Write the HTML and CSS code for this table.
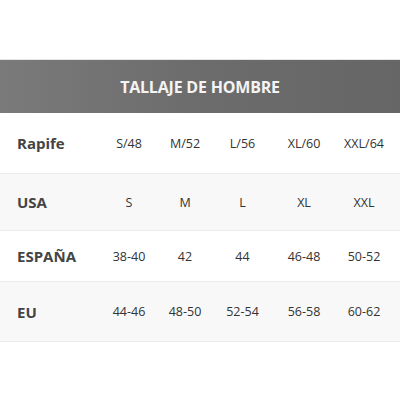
FILE: index.html
```html
<!DOCTYPE html>
<html>
<head>
<meta charset="utf-8">
<link rel="stylesheet" href="styles.css">
</head>
<body>
<div class="page">
  <div class="header">TALLAJE DE HOMBRE</div>
  <div class="row">
    <div class="label">Rapife</div>
    <div class="cell">S/48</div><div class="cell">M/52</div><div class="cell">L/56</div><div class="cell">XL/60</div><div class="cell">XXL/64</div>
  </div>
  <div class="row alt">
    <div class="label">USA</div>
    <div class="cell">S</div><div class="cell">M</div><div class="cell">L</div><div class="cell">XL</div><div class="cell">XXL</div>
  </div>
  <div class="row">
    <div class="label">ESPAÑA</div>
    <div class="cell">38-40</div><div class="cell">42</div><div class="cell">44</div><div class="cell">46-48</div><div class="cell">50-52</div>
  </div>
  <div class="row alt last">
    <div class="label">EU</div>
    <div class="cell">44-46</div><div class="cell">48-50</div><div class="cell">52-54</div><div class="cell">56-58</div><div class="cell">60-62</div>
  </div>
</div>
</body>
</html>
```

FILE: styles.css
```css
html, body {
  margin: 0;
  padding: 0;
  background: #ffffff;
}
.page {
  width: 400px;
  height: 400px;
  padding-top: 59px;
  box-sizing: border-box;
  font-family: "Open Sans", "DejaVu Sans", sans-serif;
}
.header {
  height: 53px;
  border-top: 1px solid #e6e6e6;
  background: linear-gradient(to right, #7a7a7a 0%, #6c6c6c 50%, #666666 100%);
  color: #f4f4f4;
  font-weight: 700;
  font-size: 16px;
  display: flex;
  align-items: center;
  justify-content: center;
  letter-spacing: -0.2px;
}
.row {
  display: grid;
  grid-template-columns: 101px 56px 56px 59px 64px 56px;
  align-items: center;
  height: 60px;
  border-bottom: 1px solid #ececec;
  color: #333333;
}
.row:nth-child(2) { height: 60px; }
.row:nth-child(3) { height: 56px; }
.row:nth-child(4) { height: 50px; }
.row:nth-child(5) { height: 59px; }
.row.alt {
  background: #f8f8f8;
}
.label {
  padding-left: 17px;
  font-weight: 700;
  font-size: 15px;
  color: #444444;
}
.cell {
  text-align: center;
  font-size: 12.5px;
  color: #333333;
}
```
